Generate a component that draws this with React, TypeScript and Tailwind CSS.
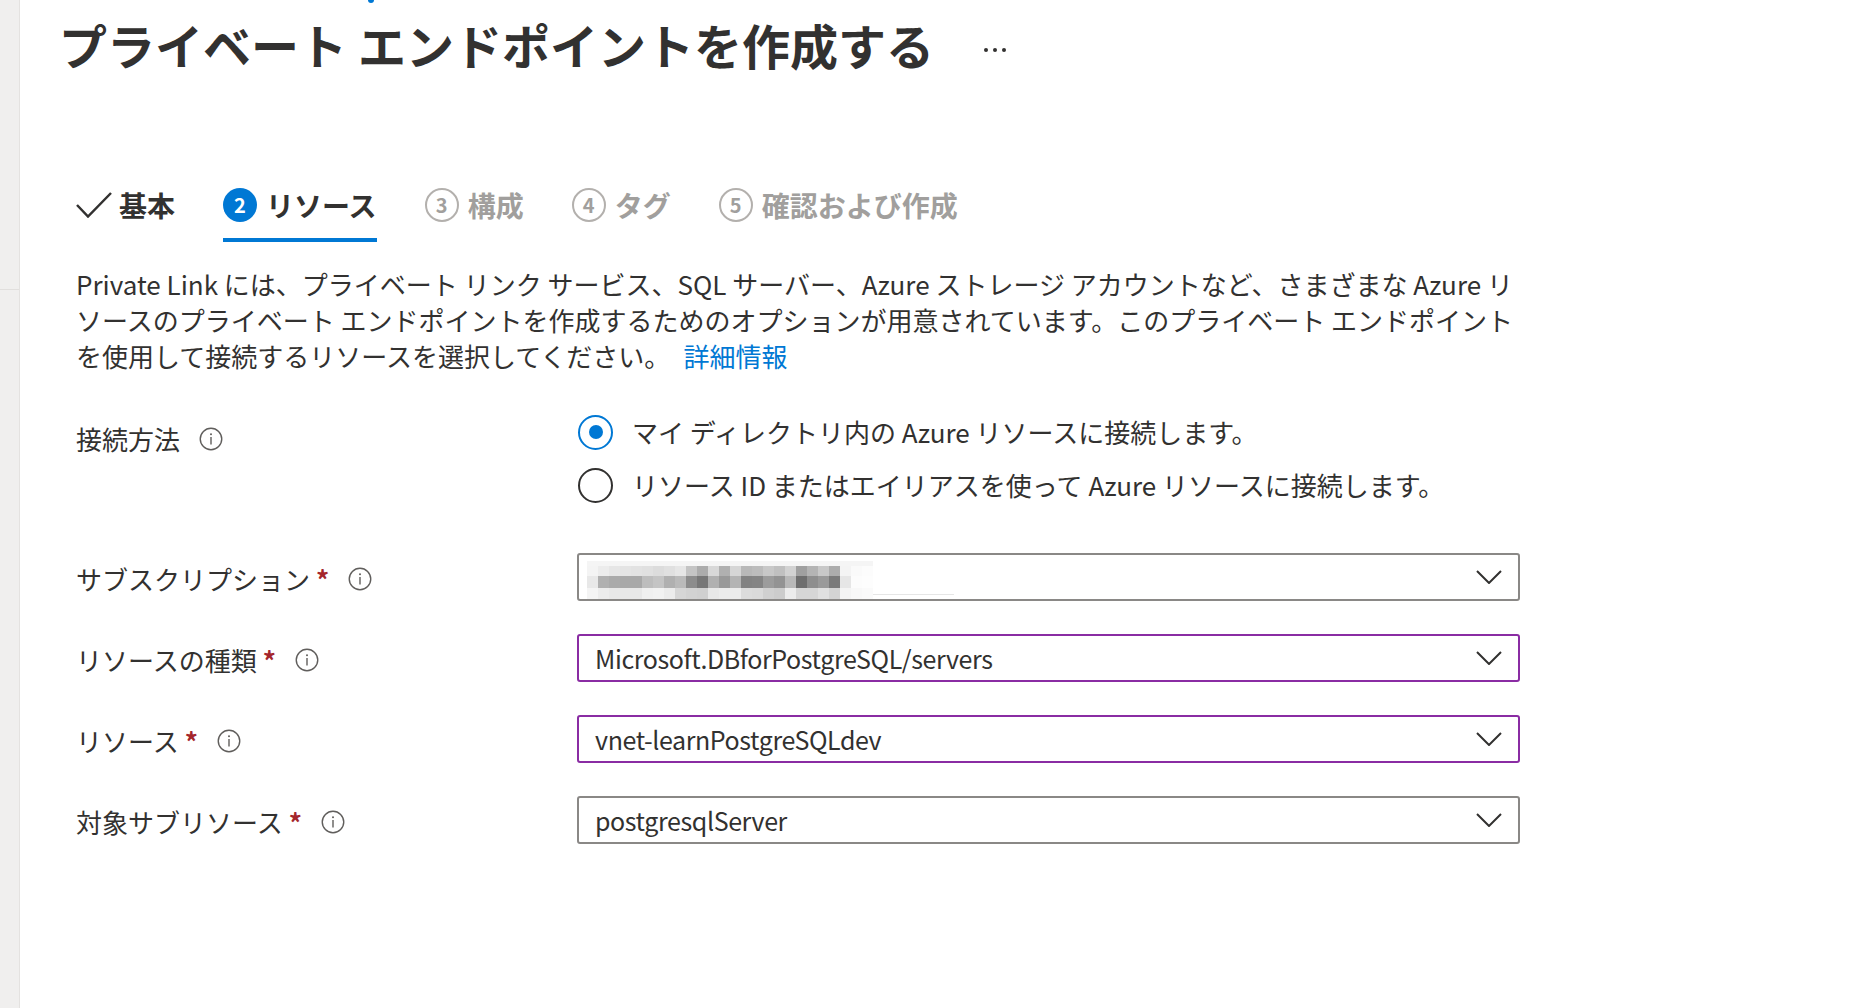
import React from 'react';

const FONT = { fontFamily: '"Noto Sans CJK JP", "Noto Sans", sans-serif' };

// ぼかし（モザイク）部分の色: 上段 / 中段 / 下段
const mosaicCols: [string, string, string][] = [
  ['bg-[#f4f4f4]', 'bg-[#e8e8e8]', 'bg-[#f4f4f4]'],
  ['bg-[#ececec]', 'bg-[#b0b0b0]', 'bg-[#ececec]'],
  ['bg-[#e6e6e6]', 'bg-[#aaaaaa]', 'bg-[#e8e8e8]'],
  ['bg-[#e4e4e4]', 'bg-[#a8a8a8]', 'bg-[#e8e8e8]'],
  ['bg-[#e2e2e2]', 'bg-[#a8a8a8]', 'bg-[#e8e8e8]'],
  ['bg-[#e0e0e0]', 'bg-[#bdbdbd]', 'bg-[#f0f0f0]'],
  ['bg-[#dcdcdc]', 'bg-[#c4c4c4]', 'bg-[#f2f2f2]'],
  ['bg-[#e0e0e0]', 'bg-[#b0b0b0]', 'bg-[#ececec]'],
  ['bg-[#e6e6e6]', 'bg-[#bababa]', 'bg-[#d6d6d6]'],
  ['bg-[#c4c4c4]', 'bg-[#8c8c8c]', 'bg-[#d2d2d2]'],
  ['bg-[#acacac]', 'bg-[#777777]', 'bg-[#d0d0d0]'],
  ['bg-[#d8d8d8]', 'bg-[#b0b0b0]', 'bg-[#e8e8e8]'],
  ['bg-[#b0b0b0]', 'bg-[#999999]', 'bg-[#ececec]'],
  ['bg-[#d6d6d6]', 'bg-[#b4b4b4]', 'bg-[#ececec]'],
  ['bg-[#b8b8b8]', 'bg-[#828282]', 'bg-[#dcdcdc]'],
  ['bg-[#bcbcbc]', 'bg-[#848484]', 'bg-[#dadada]'],
  ['bg-[#c8c8c8]', 'bg-[#9c9c9c]', 'bg-[#d0d0d0]'],
  ['bg-[#c0c0c0]', 'bg-[#939393]', 'bg-[#cccccc]'],
  ['bg-[#d2d2d2]', 'bg-[#b8b8b8]', 'bg-[#ececec]'],
  ['bg-[#a0a0a0]', 'bg-[#6e6e6e]', 'bg-[#d6d6d6]'],
  ['bg-[#b4b4b4]', 'bg-[#8e8e8e]', 'bg-[#d6d6d6]'],
  ['bg-[#c8c8c8]', 'bg-[#9a9a9a]', 'bg-[#e0e0e0]'],
  ['bg-[#acacac]', 'bg-[#7a7a7a]', 'bg-[#d4d4d4]'],
  ['bg-[#f4f4f4]', 'bg-[#e6e6e6]', 'bg-[#f4f4f4]'],
  ['bg-[#fafafa]', 'bg-[#fcfcfc]', 'bg-[#f8f8f8]'],
  ['bg-[#fcfcfc]', 'bg-[#fdfdfd]', 'bg-[#fafafa]'],
];

const InfoIcon: React.FC = () => (
  <svg width="24" height="24" viewBox="0 0 24 24" fill="none" className="ml-[19px] shrink-0">
    <circle cx="12" cy="12" r="10.75" stroke="#605e5c" strokeWidth="1.4" />
    <circle cx="12" cy="7.2" r="1" fill="#605e5c" />
    <line x1="12" y1="10" x2="12" y2="17.5" stroke="#605e5c" strokeWidth="1.4" />
  </svg>
);

const Chevron: React.FC = () => (
  <svg width="26" height="14" viewBox="0 0 26 14" fill="none" className="shrink-0">
    <polyline points="1,1 13,13 25,1" stroke="#323130" strokeWidth="2" />
  </svg>
);

const FieldLabel: React.FC<{ text: string }> = ({ text }) => (
  <div className="w-[501px] shrink-0 flex items-center translate-y-[2px] text-[26px] leading-[36px] text-[#323130]">
    <span>{text}</span>
    <span className="ml-[6px] text-[#a4262c] font-bold">*</span>
    <InfoIcon />
  </div>
);

const Dropdown: React.FC<{ dirty?: boolean; children: React.ReactNode }> = ({ dirty, children }) => (
  <div
    className={`w-[943px] h-[48px] rounded-[3px] border-2 flex items-center justify-between pl-[16px] pr-[16px] ${
      dirty ? 'border-[#8a2ca3]' : 'border-[#8a8886]'
    }`}
  >
    <div className="flex items-center text-[25px] tracking-[-0.4px] leading-[36px] text-[#323130] whitespace-nowrap">
      {children}
    </div>
    <Chevron />
  </div>
);

const Mosaic: React.FC = () => (
  <div className="-ml-[8px] flex items-end h-[44px] pt-[2px]">
    <div className="flex flex-col">
      <div className="h-[5px] w-[286px] bg-[#f5f5f5]" />
      <div className="flex">
        {mosaicCols.map((c, i) => (
          <div key={i} className="flex flex-col w-[11px]">
            <div className={`h-[10px] ${c[0]}`} />
            <div className={`h-[12px] ${c[1]}`} />
            <div className={`h-[11px] ${c[2]}`} />
          </div>
        ))}
      </div>
    </div>
    <div className="w-[81px] h-px mb-[4px] bg-[#e6e6e6]" />
  </div>
);

const StepCircle: React.FC<{ n: number; active?: boolean }> = ({ n, active }) =>
  active ? (
    <div className="w-[34px] h-[34px] rounded-full bg-[#0078d4] text-white flex items-center justify-center text-[20px] font-bold leading-none">
      {n}
    </div>
  ) : (
    <div className="w-[34px] h-[34px] rounded-full border-2 border-[#b3b0ad] text-[#a19f9d] flex items-center justify-center text-[20px] font-bold leading-none">
      {n}
    </div>
  );

const steps = [
  { n: 2, label: 'リソース', active: true },
  { n: 3, label: '構成' },
  { n: 4, label: 'タグ' },
  { n: 5, label: '確認および作成' },
];

export default function App() {
  return (
    <div className="flex h-[1008px] w-full bg-white overflow-hidden" style={FONT}>
      {/* 左側のポータル境界 */}
      <div className="w-[20px] shrink-0 bg-[#f0efee] border-r border-[#e4e2e0] flex flex-col">
        <div className="h-[289px]" />
        <div className="h-px bg-[#e1dfdd]" />
      </div>

      <main className="flex-1 flex flex-col">
        <div className="h-[3px] pl-[348px]">
          <div className="w-[6px] h-[3px] rounded-b-full bg-[#0078d4]" />
        </div>

        {/* タイトル */}
        <div className="flex items-center pl-[39px] pt-[11px]">
          <h1 className="text-[48px] leading-[60px] font-bold text-[#323130] whitespace-nowrap">
            プライベート エンドポイントを作成する
          </h1>
          <div className="ml-[50px] mt-[12px] flex gap-[5px]">
            <span className="w-[4px] h-[4px] rounded-full bg-[#323130]" />
            <span className="w-[4px] h-[4px] rounded-full bg-[#323130]" />
            <span className="w-[4px] h-[4px] rounded-full bg-[#323130]" />
          </div>
        </div>

        <div className="pl-[56px] w-[1500px]">
          {/* ウィザードのタブ */}
          <div className="flex gap-[48px] mt-[114px]">
            <div className="flex flex-col">
              <div className="flex items-center h-[34px] gap-[7px]">
                <svg width="36" height="26" viewBox="0 0 36 26" fill="none">
                  <polyline points="1,13 12,24.5 35,1" stroke="#323130" strokeWidth="2.5" />
                </svg>
                <span className="text-[28px] leading-[34px] font-bold text-[#323130]">基本</span>
              </div>
              <div className="mt-[16px] h-[4px]" />
            </div>
            {steps.map((s) => (
              <div key={s.n} className="flex flex-col">
                <div className="flex items-center h-[34px] gap-[9px]">
                  <StepCircle n={s.n} active={s.active} />
                  <span
                    className={`text-[28px] leading-[34px] font-bold whitespace-nowrap ${
                      s.active ? 'text-[#323130]' : 'text-[#a19f9d]'
                    }`}
                  >
                    {s.label}
                  </span>
                </div>
                <div className={`mt-[16px] h-[4px] ${s.active ? 'bg-[#0078d4]' : ''}`} />
              </div>
            ))}
          </div>

          {/* 説明文 */}
          <p className="mt-[24px] text-[26px] leading-[36px] text-[#323130] whitespace-nowrap">
            Private Link には、プライベート リンク サービス、SQL サーバー、Azure ストレージ アカウントなど、さまざまな Azure リ
            <br />
            ソースのプライベート エンドポイントを作成するためのオプションが用意されています。このプライベート エンドポイント
            <br />
            を使用して接続するリソースを選択してください。
            <a className="ml-[13px] text-[#0078d4]">詳細情報</a>
          </p>

          {/* 接続方法 */}
          <div className="flex mt-[40px]">
            <div className="w-[501px] shrink-0 flex items-center h-[36px] mt-[7px] text-[26px] leading-[36px] text-[#323130]">
              <span>接続方法</span>
              <InfoIcon />
            </div>
            <div className="flex flex-col gap-[17px] pl-[1px]">
              <div className="flex items-center h-[36px] gap-[19px]">
                <div className="w-[35px] h-[35px] rounded-full border-2 border-[#0078d4] flex items-center justify-center">
                  <div className="w-[14px] h-[14px] rounded-full bg-[#0078d4]" />
                </div>
                <span className="text-[26px] leading-[36px] text-[#323130] whitespace-nowrap">
                  マイ ディレクトリ内の Azure リソースに接続します。
                </span>
              </div>
              <div className="flex items-center h-[36px] gap-[19px]">
                <div className="w-[35px] h-[35px] rounded-full border-2 border-[#323130]" />
                <span className="text-[26px] leading-[36px] text-[#323130] whitespace-nowrap">
                  リソース ID またはエイリアスを使って Azure リソースに接続します。
                </span>
              </div>
            </div>
          </div>

          {/* ドロップダウン */}
          <div className="flex flex-col gap-[33px] mt-[50px]">
            <div className="flex items-center">
              <FieldLabel text="サブスクリプション" />
              <Dropdown>
                <Mosaic />
              </Dropdown>
            </div>
            <div className="flex items-center">
              <FieldLabel text="リソースの種類" />
              <Dropdown dirty>Microsoft.DBforPostgreSQL/servers</Dropdown>
            </div>
            <div className="flex items-center">
              <FieldLabel text="リソース" />
              <Dropdown dirty>vnet-learnPostgreSQLdev</Dropdown>
            </div>
            <div className="flex items-center">
              <FieldLabel text="対象サブリソース" />
              <Dropdown>postgresqlServer</Dropdown>
            </div>
          </div>
        </div>
      </main>
    </div>
  );
}
